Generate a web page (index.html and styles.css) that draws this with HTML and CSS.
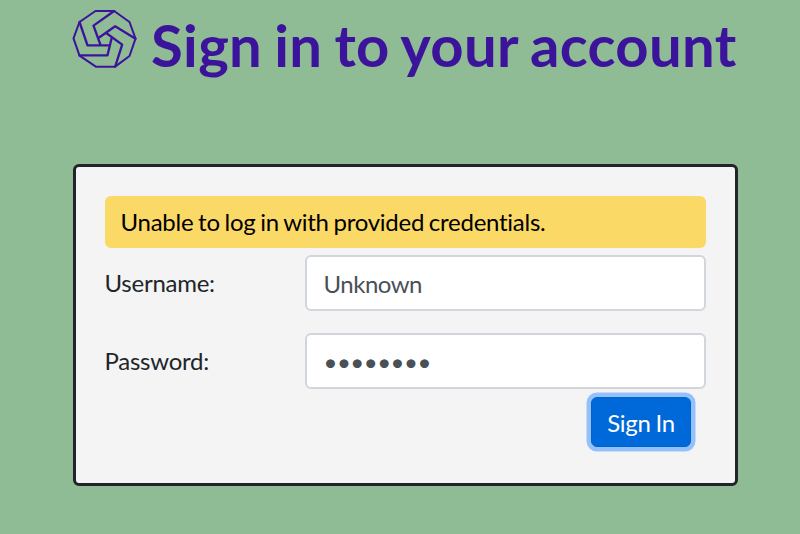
FILE: index.html
```html
<!DOCTYPE html>
<html lang="en">
<head>
<meta charset="utf-8">
<title>Sign in</title>
<link rel="stylesheet" href="styles.css">
</head>
<body>
<main class="page">
  <header class="header">
    <svg class="logo" viewBox="18 18 194 174" fill="none" stroke="currentColor" stroke-width="6" stroke-linejoin="round" stroke-linecap="round" aria-hidden="true">
      <path d="M88 21H144L190 54L208 104L190 156L147 188H89L40 155L22 103L40 54Z"/>
      <path stroke-width="7" d="M144 21L82 65L102 120M208 104L147 67L98 101M147 188L168 122L120 87M40 154H124L137 100M40 54L64 124H131"/>
    </svg>
    <h1 class="title">Sign in to your account</h1>
  </header>
  <form class="card">
    <div class="alert" role="alert">Unable to log in with provided credentials.</div>
    <div class="row">
      <label class="label" for="username">Username:</label>
      <input class="input" id="username" type="text" value="Unknown">
    </div>
    <div class="row">
      <label class="label" for="password">Password:</label>
      <input class="input input-password" id="password" type="password" value="password">
    </div>
    <div class="actions"><button class="button" type="button">Sign In</button></div>
  </form>
</main>
</body>
</html>
```
FILE: styles.css
```css
* { box-sizing: border-box; }
body {
  margin: 0;
  height: 534px;
  overflow: hidden;
  background: #8fbc95;
  color: #212529;
  font: 24px/36px Lato, sans-serif;
  font-variant-ligatures: none;
}
.page { width: 665px; margin-left: 72.5px; }
.header { display: flex; height: 164px; color: #3c149c; }
.logo { flex: none; width: 65px; height: 58px; margin: 10px 0 0 -0.5px; }
.title {
  margin: 10.4px 0 0 14px;
  font-size: 58px;
  line-height: 70px;
  font-weight: 700;
  letter-spacing: 0.35px;
  word-spacing: -2.4px;
  white-space: nowrap;
}
.card {
  height: 322px;
  padding: 29px 29px 0;
  border: 3px solid #212529;
  border-radius: 6px;
  background: #f4f4f4;
}
.alert {
  height: 52px;
  margin-bottom: 7px;
  padding: 8px 16px;
  border-radius: 6px;
  background: #fbd966;
  color: #000;
  letter-spacing: -0.26px;
  word-spacing: -1.1px;
}
.label { letter-spacing: -0.25px; }
.row {
  display: grid;
  grid-template-columns: 200px 401px;
  align-items: center;
  height: 56px;
  margin-bottom: 22px;
}
.input {
  width: 401px;
  height: 56px;
  padding: 0 17px;
  border: 2px solid #d0d6dc;
  border-radius: 6px;
  background: #fff;
  color: #495057;
  font: inherit;
  letter-spacing: -0.5px;
}
.actions { display: flex; justify-content: flex-end; margin: -14.2px 14.5px 0 0; }
.button {
  width: 100px;
  height: 50px;
  padding: 2px 0 0;
  border: 1.5px solid #0062cc;
  border-radius: 6px;
  background: #0069d9;
  box-shadow: 0 0 0 4.5px #95c1fb;
  color: #fff;
  font: inherit;
  letter-spacing: -0.3px;
  word-spacing: -1px;
}
```
